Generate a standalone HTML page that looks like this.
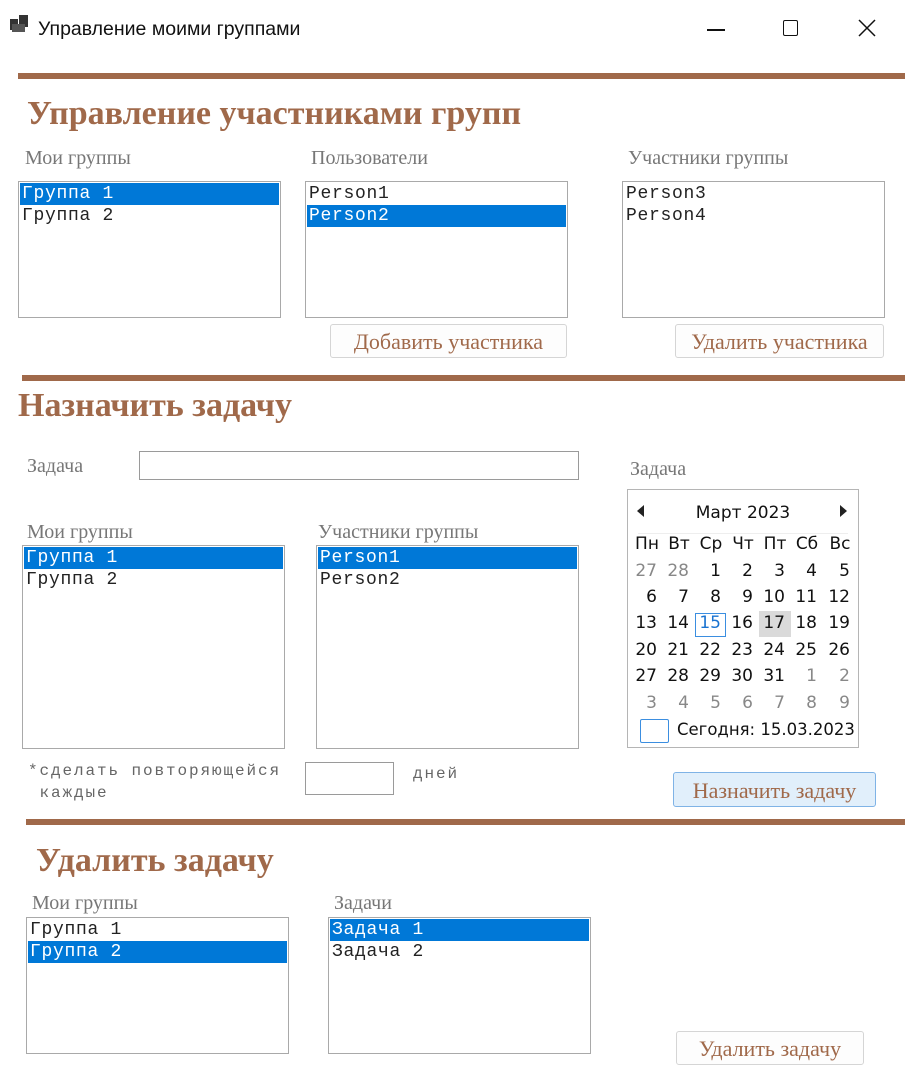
<!DOCTYPE html>
<html><head><meta charset="utf-8">
<style>
*{margin:0;padding:0;box-sizing:border-box}
body{width:906px;height:1079px;background:#fff;position:relative;overflow:hidden;font-family:"Liberation Sans",sans-serif}
.a{position:absolute;white-space:nowrap}
.bar{position:absolute;height:6px;background:#a0694a;right:1px}
.h{position:absolute;font-family:"Liberation Serif",serif;font-weight:bold;color:#a0694a;font-size:34px;white-space:nowrap}
.lbl{position:absolute;font-family:"Liberation Serif",serif;color:#777;font-size:20px;white-space:nowrap}
.lb{position:absolute;border:1px solid #a9a9a9;background:#fff;padding:1px}
.it{height:22px;line-height:23px;font-family:"Liberation Mono",monospace;font-size:18px;letter-spacing:0.7px;color:#222;padding-left:2px;white-space:nowrap}
.sel{background:#0078d7;color:#fff}
.btn{position:absolute;border:1px solid #d5d5d5;border-radius:3px;background:#fdfdfd;font-family:"Liberation Serif",serif;color:#a0694a;font-size:22px;text-align:center;line-height:33px;white-space:nowrap}
.cal{position:absolute;left:627px;top:489px;width:232px;height:259px;border:1px solid #b5b5b5;font-family:"DejaVu Sans","Liberation Sans",sans-serif}
</style></head><body>
<div class="a" style="left:10px;top:19px;width:8px;height:11px;background:#333"></div>
<div class="a" style="left:19px;top:15px;width:9px;height:12px;background:#333"></div>
<div class="a" style="left:12px;top:24px;width:13px;height:8px;background:#555"></div>
<div class="a" style="left:38px;top:18px;font-size:19.5px;color:#111">Управление моими группами</div>
<div class="a" style="left:707px;top:29px;width:18px;height:1.5px;background:#111"></div>
<div class="a" style="left:783px;top:20px;width:15px;height:16px;border:1.5px solid #111;border-radius:2px"></div>
<svg class="a" style="left:858px;top:19px" width="18" height="18"><path d="M1 1L17 17M17 1L1 17" stroke="#111" stroke-width="1.5"/></svg>

<div class="bar" style="left:18px;top:73px"></div>
<div class="h" style="left:27px;top:95px">Управление участниками групп</div>
<div class="lbl" style="left:25px;top:147px">Мои группы</div>
<div class="lbl" style="left:311px;top:147px">Пользователи</div>
<div class="lbl" style="left:628px;top:147px">Участники группы</div>
<div class="lb" style="left:18px;top:181px;width:263px;height:137px"><div class="it sel">Группа 1</div><div class="it">Группа 2</div></div>
<div class="lb" style="left:305px;top:181px;width:263px;height:137px"><div class="it">Person1</div><div class="it sel">Person2</div></div>
<div class="lb" style="left:622px;top:181px;width:263px;height:137px"><div class="it">Person3</div><div class="it">Person4</div></div>
<div class="btn" style="left:330px;top:324px;width:237px;height:34px">Добавить участника</div>
<div class="btn" style="left:675px;top:324px;width:209px;height:34px">Удалить участника</div>

<div class="bar" style="left:22px;top:375px"></div>
<div class="h" style="left:18px;top:387px">Назначить задачу</div>
<div class="lbl" style="left:27px;top:455px">Задача</div>
<div class="a" style="left:139px;top:451px;width:440px;height:29px;border:1px solid #9a9a9a"></div>
<div class="lbl" style="left:630px;top:458px">Задача</div>
<div class="lbl" style="left:27px;top:521px">Мои группы</div>
<div class="lbl" style="left:318px;top:521px">Участники группы</div>
<div class="lb" style="left:22px;top:545px;width:263px;height:204px"><div class="it sel">Группа 1</div><div class="it">Группа 2</div></div>
<div class="lb" style="left:316px;top:545px;width:263px;height:204px"><div class="it sel">Person1</div><div class="it">Person2</div></div>
<div class="a" style="left:28px;top:760px;font-family:'Liberation Mono',monospace;font-size:16px;color:#666;line-height:22px;letter-spacing:1.9px">*сделать повторяющейся<br>&nbsp;каждые</div>
<div class="a" style="left:305px;top:762px;width:89px;height:33px;border:1px solid #9a9a9a"></div>
<div class="a" style="left:413px;top:765px;font-family:'Liberation Mono',monospace;font-size:16px;color:#666;letter-spacing:1.9px">дней</div>

<div class="cal">
<svg class="a" style="left:9px;top:15px" width="8" height="12"><path d="M7 0L0 6L7 12Z" fill="#222"/></svg>
<svg class="a" style="left:212px;top:15px" width="8" height="12"><path d="M0 0L7 6L0 12Z" fill="#222"/></svg>
<div class="a" style="left:0;width:230px;text-align:center;top:13px;font-size:17px;color:#111">Март 2023</div>
<div class="a" style="left:10px;top:43px;width:210px;height:1px;background:#eee"></div>
</div>
<div class="a" style="left:695px;top:613px;width:31px;height:24px;border:1px solid #3b8ee0"></div>
<div class="a" style="left:759px;top:611px;width:32px;height:26px;background:#dadada"></div>
<div id="days"></div>
<div class="a" style="left:640px;top:719px;width:29px;height:24px;border:1px solid #3b8ee0;border-radius:2px"></div>
<div class="a" style="left:677px;top:720px;font-family:'DejaVu Sans',sans-serif;font-size:16.5px;color:#111">Сегодня: 15.03.2023</div>
<script>
var cols=[647,679,711,743,775,807,840],rows=[534,561,587,613,640,666,693];
var data=[["Пн","Вт","Ср","Чт","Пт","Сб","Вс"],
["g27","g28","1","2","3","4","5"],["6","7","8","9","10","11","12"],
["13","14","15","16","17","18","19"],["20","21","22","23","24","25","26"],
["27","28","29","30","31","g1","g2"],["g3","g4","g5","g6","g7","g8","g9"]];
var h="";
for(var r=0;r<7;r++)for(var c=0;c<7;c++){var t=data[r][c],g=t[0]=="g";if(g)t=t.slice(1);
var col=g?"#888":(r==3&&c==2?"#1a73d0":"#111");
h+='<div class="a" style="left:'+(cols[c]-20)+'px;width:'+(r==0?40:30)+'px;text-align:'+(r==0?'center':'right')+';top:'+rows[r]+'px;font-family:DejaVu Sans,sans-serif;font-size:17px;color:'+col+'">'+t+'</div>';}
document.getElementById("days").innerHTML=h;
</script>
<div class="btn" style="left:673px;top:772px;width:203px;height:35px;background:#e1effb;border:1px solid #7fb3e6;line-height:35px">Назначить задачу</div>

<div class="bar" style="left:26px;top:819px"></div>
<div class="h" style="left:36px;top:842px">Удалить задачу</div>
<div class="lbl" style="left:32px;top:892px">Мои группы</div>
<div class="lbl" style="left:334px;top:892px">Задачи</div>
<div class="lb" style="left:26px;top:917px;width:263px;height:137px"><div class="it">Группа 1</div><div class="it sel">Группа 2</div></div>
<div class="lb" style="left:328px;top:917px;width:263px;height:137px"><div class="it sel">Задача 1</div><div class="it">Задача 2</div></div>
<div class="btn" style="left:676px;top:1031px;width:188px;height:34px">Удалить задачу</div>
</body></html>
